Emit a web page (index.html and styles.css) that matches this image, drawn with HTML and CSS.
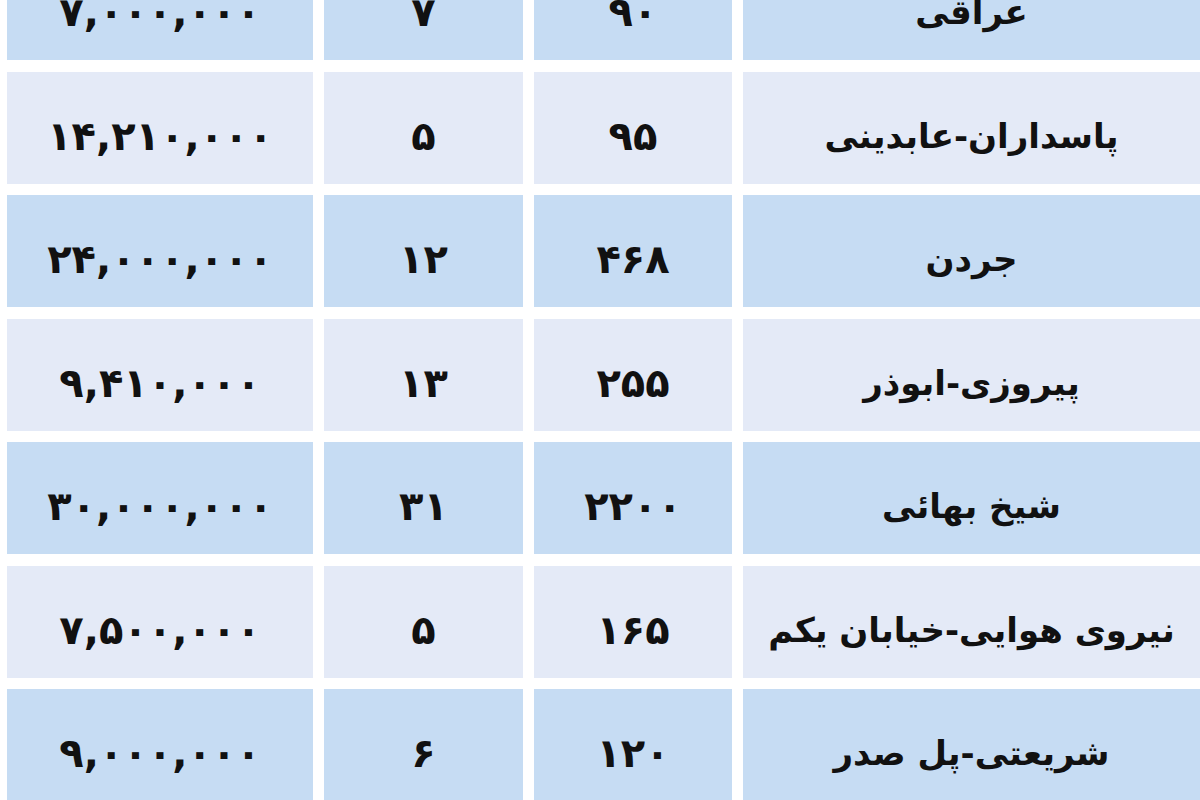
FILE: index.html
```html
<!DOCTYPE html>
<html lang="fa" dir="rtl">
<head>
<meta charset="utf-8">
<title>جدول قیمت</title>
<link rel="stylesheet" href="styles.css">
</head>
<body>
<div class="table">
  <div class="row row-blue">
    <div class="cell name">عراقی</div>
    <div class="cell num">۹۰</div>
    <div class="cell num">۷</div>
    <div class="cell num price">۷,۰۰۰,۰۰۰</div>
  </div>
  <div class="row row-light">
    <div class="cell name">پاسداران-عابدینی</div>
    <div class="cell num">۹۵</div>
    <div class="cell num">۵</div>
    <div class="cell num price">۱۴,۲۱۰,۰۰۰</div>
  </div>
  <div class="row row-blue">
    <div class="cell name">جردن</div>
    <div class="cell num">۴۶۸</div>
    <div class="cell num">۱۲</div>
    <div class="cell num price">۲۴,۰۰۰,۰۰۰</div>
  </div>
  <div class="row row-light">
    <div class="cell name">پیروزی-ابوذر</div>
    <div class="cell num">۲۵۵</div>
    <div class="cell num">۱۳</div>
    <div class="cell num price">۹,۴۱۰,۰۰۰</div>
  </div>
  <div class="row row-blue">
    <div class="cell name">شیخ بهائی</div>
    <div class="cell num">۲۲۰۰</div>
    <div class="cell num">۳۱</div>
    <div class="cell num price">۳۰,۰۰۰,۰۰۰</div>
  </div>
  <div class="row row-light">
    <div class="cell name">نیروی هوایی-خیابان یکم</div>
    <div class="cell num">۱۶۵</div>
    <div class="cell num">۵</div>
    <div class="cell num price">۷,۵۰۰,۰۰۰</div>
  </div>
  <div class="row row-blue">
    <div class="cell name">شریعتی-پل صدر</div>
    <div class="cell num">۱۲۰</div>
    <div class="cell num">۶</div>
    <div class="cell num price">۹,۰۰۰,۰۰۰</div>
  </div>
</div>
</body>
</html>
```

FILE: styles.css
```css
html, body {
  margin: 0;
  padding: 0;
  background: #ffffff;
  overflow: hidden;
}

body {
  width: 1200px;
  height: 800px;
  font-family: "DejaVu Sans", "Noto Sans", sans-serif;
  color: #111111;
}

.table {
  display: flex;
  flex-direction: column;
  gap: 11.5px;
  margin-top: -52px;
  padding-left: 7px;
}

.row {
  display: grid;
  grid-template-columns: 457px 198px 199px 306px;
  column-gap: 11px;
  height: 112px;
}

.row-blue .cell {
  background: #c6dcf3;
}

.row-light .cell {
  background: #e4eaf7;
}

.cell {
  display: flex;
  align-items: center;
  justify-content: center;
  padding-top: 16px;
  box-sizing: border-box;
  white-space: nowrap;
}

.name {
  font-size: 34px;
  font-weight: bold;
}

.num {
  font-size: 40px;
  font-weight: bold;
  direction: ltr;
}
```
